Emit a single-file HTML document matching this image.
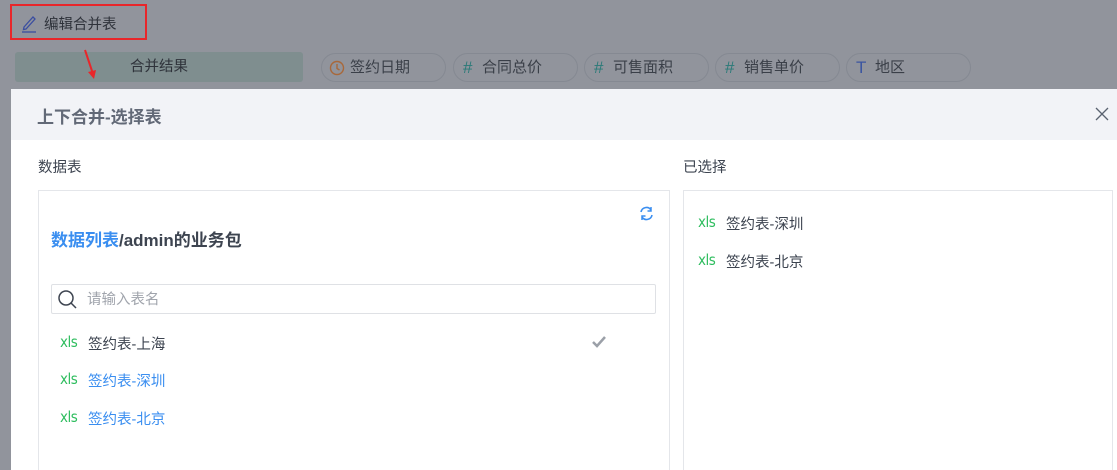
<!DOCTYPE html>
<html><head><meta charset="utf-8"><style>
*{margin:0;padding:0;box-sizing:border-box}
html,body{width:1117px;height:470px;overflow:hidden}
body{background:#91949c;font-family:"Liberation Sans","Noto Sans CJK SC",sans-serif;position:relative;color:#3d4450}
.abs{position:absolute}
.pill{position:absolute;top:53px;height:29px;border:1px solid #858992;border-radius:15px;font-size:15px;color:#3a3f48;line-height:27px;padding-left:28px}
.pill i{position:absolute;left:9px;top:0;font-style:normal;font-size:17px}
.xls{color:#2fbd5f;font-size:15px;letter-spacing:-0.5px;position:absolute;font-family:"DejaVu Sans Condensed","Liberation Sans",sans-serif}
.item{position:absolute;font-size:14.5px}
</style></head><body>
<div class="abs" style="left:10px;top:4px;width:137px;height:36px;border:2px solid #e8262a"></div>
<svg class="abs" style="left:20px;top:13px" width="18" height="20" viewBox="0 0 18 20"><path d="M4 14 L13 4 L15 6 L6 16 L3.5 16.5 Z" fill="none" stroke="#3b4ea0" stroke-width="1.3"/><line x1="2" y1="19" x2="16" y2="19" stroke="#3b4ea0" stroke-width="1.3"/></svg>
<div class="abs" style="left:44px;top:13px;font-size:14.5px;color:#2e323a">编辑合并表</div>
<div class="abs" style="left:15px;top:52px;width:288px;height:30px;background:#7f8e8f;border-radius:3px;text-align:center;line-height:30px;font-size:14.5px;color:#2e323a">合并结果</div>
<svg class="abs" style="left:82px;top:48px" width="16" height="34"><line x1="3" y1="2" x2="11" y2="26" stroke="#e8262a" stroke-width="2"/><path d="M6 24 L12 31 L14 22 Z" fill="#e8262a"/></svg>
<div class="pill" style="left:321px;width:125px"><svg style="position:absolute;left:7px;top:6px" width="16" height="16"><circle cx="8" cy="8" r="6.5" fill="none" stroke="#a8683a" stroke-width="1.4"/><path d="M8 4V8.5L10.5 10" fill="none" stroke="#a8683a" stroke-width="1.4"/></svg>签约日期</div>
<div class="pill" style="left:453px;width:125px"><i style="color:#2a7a78">#</i>合同总价</div>
<div class="pill" style="left:584px;width:125px"><i style="color:#2a7a78">#</i>可售面积</div>
<div class="pill" style="left:715px;width:125px"><i style="color:#2a7a78">#</i>销售单价</div>
<div class="pill" style="left:846px;width:125px"><i style="color:#3b55a0">T</i>地区</div>
<div class="abs" style="left:11px;top:89px;width:1106px;height:381px;background:#fff"></div>
<div class="abs" style="left:11px;top:89px;width:1106px;height:51px;background:#f2f3f7"></div>
<div class="abs" style="left:37px;top:103px;font-size:17px;font-weight:bold;color:#626977">上下合并-选择表</div>
<svg class="abs" style="left:1095px;top:107px" width="14" height="14"><path d="M1 1L13 13M13 1L1 13" stroke="#5a6270" stroke-width="1.3"/></svg>
<div class="abs" style="left:38px;top:156px;font-size:14.5px;color:#3d4450">数据表</div>
<div class="abs" style="left:683px;top:156px;font-size:14.5px;color:#3d4450">已选择</div>
<div class="abs" style="left:38px;top:190px;width:632px;height:282px;border:1px solid #e4e6ea"></div>
<div class="abs" style="left:683px;top:190px;width:430px;height:282px;border:1px solid #e4e6ea"></div>
<svg class="abs" style="left:638px;top:205px" width="17" height="17" viewBox="0 0 17 17"><path d="M3 7A5.5 5.5 0 0 1 13 5" fill="none" stroke="#3a8ef0" stroke-width="1.6"/><path d="M14 10A5.5 5.5 0 0 1 4 12" fill="none" stroke="#3a8ef0" stroke-width="1.6"/><path d="M13 2V6H9.5" fill="none" stroke="#3a8ef0" stroke-width="1.5"/><path d="M4 15V11H7.5" fill="none" stroke="#3a8ef0" stroke-width="1.5"/></svg>
<div class="abs" style="left:51px;top:226px;font-size:17px;font-weight:bold;color:#3d4450"><span style="color:#3a8ef0">数据列表</span>/admin的业务包</div>
<div class="abs" style="left:51px;top:284px;width:605px;height:30px;border:1px solid #dfe1e5;border-radius:2px"></div>
<svg class="abs" style="left:57px;top:288px" width="22" height="22"><circle cx="9" cy="10" r="7" fill="none" stroke="#3d4450" stroke-width="1.5"/><line x1="14" y1="15" x2="19" y2="20" stroke="#3d4450" stroke-width="1.5"/></svg>
<div class="abs" style="left:87px;top:288px;font-size:14.5px;color:#a0a4ac">请输入表名</div>
<div class="xls" style="left:60px;top:333px">xls</div><div class="item" style="left:88px;top:333px;color:#3d4450">签约表-上海</div>
<svg class="abs" style="left:591px;top:335px" width="16" height="14"><path d="M2 7L6 11L14 2" fill="none" stroke="#9ba0a8" stroke-width="2.5"/></svg>
<div class="xls" style="left:60px;top:370px">xls</div><div class="item" style="left:88px;top:370px;color:#3a8ef0">签约表-深圳</div>
<div class="xls" style="left:60px;top:408px">xls</div><div class="item" style="left:88px;top:408px;color:#3a8ef0">签约表-北京</div>
<div class="xls" style="left:698px;top:213px">xls</div><div class="item" style="left:726px;top:213px;color:#3d4450">签约表-深圳</div>
<div class="xls" style="left:698px;top:251px">xls</div><div class="item" style="left:726px;top:251px;color:#3d4450">签约表-北京</div>
</body></html>
